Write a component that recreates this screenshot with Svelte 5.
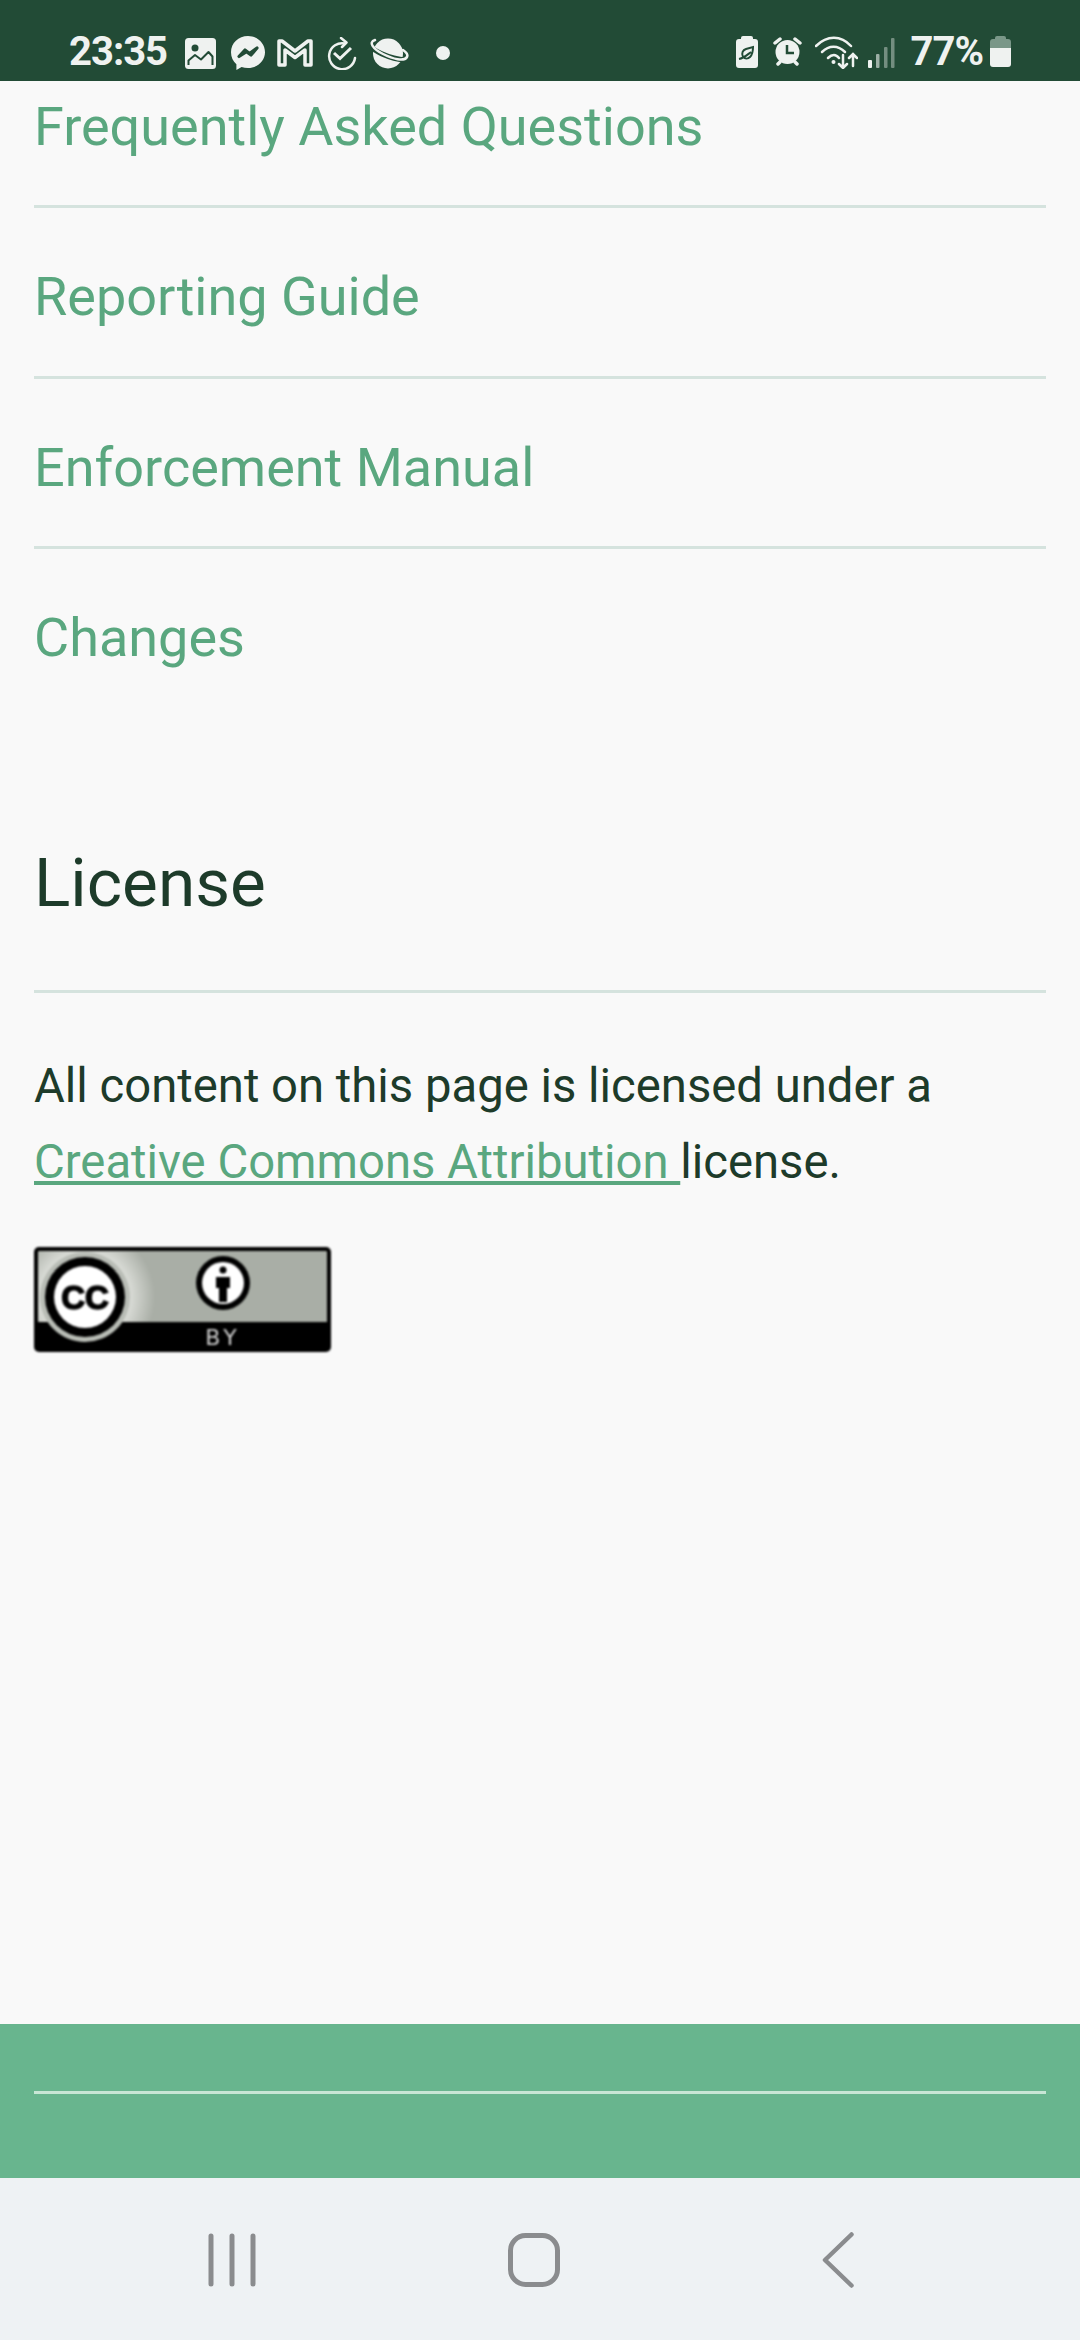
<script lang="ts">
	const links = ['Frequently Asked Questions', 'Reporting Guide', 'Enforcement Manual', 'Changes'];
</script>

<div class="phone">
	<header class="statusbar">
		<span class="clock">23:35</span>
		<div class="notif">
			<span class="slot">
				<svg width="31" height="31" viewBox="0 0 31 31">
					<rect width="31" height="31" rx="3.500" fill="#eff2f0"/>
					<circle cx="10" cy="10" r="3.500" fill="#224b36"/>
					<path fill="none" stroke="#224b36" stroke-width="2" stroke-linejoin="round" d="M3.500 27v-4.500L10 17l6 4.500 7.500-7.500 4 4.500V27"/>
				</svg>
			</span>
			<span class="slot">
				<svg width="34" height="35" viewBox="0 0 34 35">
					<path fill="#eff2f0" d="M17 0C7.500 0 0 7 0 16.300c0 4.900 2 9.100 5.400 12v5.700l5.200-2.900c2 .6 4.100.9 6.400.9 9.500 0 17-7 17-15.700S26.500 0 17 0z"/>
					<path fill="none" stroke="#224b36" stroke-width="3.200" stroke-linejoin="round" d="M8 20.500l6-6.500 4.500 3.500L26 12l-6 7-4.500-3.300z"/>
				</svg>
			</span>
			<span class="slot">
				<svg width="36" height="28" viewBox="0 0 36 28">
					<path fill="none" stroke="#eff2f0" stroke-width="3.500" stroke-linejoin="round" d="M2 2h3l13 10 13-10h3v24h-6V11l-10 7.500L8 11v15H2z"/>
				</svg>
			</span>
			<span class="slot">
				<svg width="30" height="33" viewBox="0 0 30 33">
					<path fill="none" stroke="#eff2f0" stroke-width="2.500" stroke-linecap="round" d="M18 6.500A13 13 0 1 0 28 21"/>
					<path fill="none" stroke="#eff2f0" stroke-width="2.500" stroke-linecap="round" stroke-linejoin="round" d="M14 1l5.500 4.500L15 10"/>
					<path fill="none" stroke="#eff2f0" stroke-width="3" d="M7 16l6 5.500L24 11"/>
				</svg>
			</span>
			<span class="slot">
				<svg width="40" height="31" viewBox="0 0 40 31">
					<ellipse cx="19" cy="15.500" rx="15" ry="15" fill="#eff2f0"/>
					<path fill="none" stroke="#224b36" stroke-width="5" d="M0 6c2 6 20 15 37 16"/>
					<path fill="none" stroke="#eff2f0" stroke-width="2.500" stroke-linecap="round" d="M6 2C-1 4 4 11 14 16s21 8 24 3c1-2-1-5-4-7"/>
				</svg>
			</span>
			<span class="dot"></span>
		</div>

		<div class="sys">
			<svg class="s-batt" width="22" height="32" viewBox="0 0 22 32">
				<path fill="#eff2f0" d="M7 0h8a2 2 0 0 1 2 2v1h2a3 3 0 0 1 3 3v23a3 3 0 0 1-3 3H3a3 3 0 0 1-3-3V6a3 3 0 0 1 3-3h2V2a2 2 0 0 1 2-2z"/>
				<path fill="none" stroke="#224b36" stroke-width="2" d="M3 23c5-1 8-4 12-7M7 21c-2-4 0-7 3-8l7-2c0 4-1 8-3 10s-5 2-7 0"/>
			</svg>
			<svg class="s-alarm" width="29" height="30" viewBox="0 0 29 30">
				<circle cx="14.500" cy="16" r="12" fill="#eff2f0"/>
				<path fill="none" stroke="#eff2f0" stroke-width="3.500" stroke-linecap="round" d="M2 7l5-4M27 7l-5-4M5 28l2-2M24 28l-2-2"/>
				<path fill="none" stroke="#224b36" stroke-width="2.500" d="M14 9v8h7"/>
			</svg>
			<svg class="s-wifi" width="43" height="33" viewBox="0 0 43 33">
				<g fill="none" stroke="#eff2f0" stroke-width="2.500" stroke-linecap="round">
					<path d="M1 10C12 -1 26 -1 36 10"/>
					<path d="M7 16c7-7 16-7 23 0"/>
					<path d="M13 22c4-4 8-4 11 0"/>
					<path d="M28 19v13M24 28l4 4 4-4M38 30V18M34 22l4-4 4 4"/>
				</g>
				<circle cx="18.500" cy="26" r="2" fill="#eff2f0"/>
			</svg>
			<svg class="s-signal" width="27" height="30" viewBox="0 0 27 30">
				<rect x="0" y="22" width="4" height="8" rx="1" fill="#eff2f0"/>
				<rect x="8" y="16" width="3.500" height="14" rx="1" fill="#eff2f0" opacity="0.6"/>
				<rect x="16" y="9" width="3.500" height="21" rx="1" fill="#eff2f0" opacity="0.4"/>
				<rect x="23" y="0" width="3.500" height="30" rx="1" fill="#eff2f0" opacity="0.4"/>
			</svg>
			<span class="pct">77%</span>
			<svg class="s-level" width="21" height="31" viewBox="0 0 21 31">
				<path fill="#7a9788" d="M7 0h7a2 2 0 0 1 2 2v1h2a3 3 0 0 1 3 3v6H0V6a3 3 0 0 1 3-3h2V2a2 2 0 0 1 2-2z"/>
				<path fill="#eff2f0" d="M0 12h21v16a3 3 0 0 1-3 3H3a3 3 0 0 1-3-3z"/>
			</svg>
		</div>
	</header>

	<main class="page">
		<ul class="links">
			{#each links as link}
				<li><a href="#top">{link}</a></li>
			{/each}
		</ul>

		<h2>License</h2>
		<p>
			All content on this page is licensed under a
			<a class="inline" href="#top">Creative Commons Attribution&nbsp;</a>license.
		</p>

		<svg class="badge" width="297" height="105" viewBox="0 0 297 105" role="img" aria-label="CC BY">
			<defs>
				<radialGradient id="halo" gradientUnits="userSpaceOnUse" cx="51" cy="50" r="70">
					<stop offset="0.6" stop-color="#dfe1dc"/>
					<stop offset="1" stop-color="#a9aea6"/>
				</radialGradient>
			</defs>
			<rect width="297" height="105" rx="5" fill="#000"/>
			<path d="M5 4h287a1 1 0 0 1 1 1v70H5a1 1 0 0 1-1-1V5a1 1 0 0 1 1-1z" fill="url(#halo)"/>
			<circle cx="51" cy="50" r="45" fill="#b9bdb6"/>
			<circle cx="51" cy="50" r="40" fill="#000"/>
			<circle cx="51" cy="50" r="31" fill="#fff"/>
			<text class="cc" x="51" y="62">CC</text>
			<circle cx="189" cy="36" r="27" fill="#000"/>
			<circle cx="189" cy="36" r="21" fill="#fff"/>
			<circle cx="189" cy="23" r="3.500" fill="#000"/>
			<path d="M182 30h14v11h-3v14h-8V41h-3z" fill="#000"/>
			<text class="by" x="189" y="98">BY</text>
		</svg>
	</main>

	<footer class="foot">
		<hr />
	</footer>

	<nav class="navbar">
		<svg width="48" height="54" viewBox="0 0 48 54">
			<path fill="none" stroke="#8a8c8e" stroke-width="5" stroke-linecap="round" d="M3 3v48M24 3v48M45 3v48"/>
		</svg>
		<svg width="52" height="54" viewBox="0 0 52 54">
			<rect x="2.500" y="2.500" width="47" height="49" rx="15" fill="none" stroke="#8a8c8e" stroke-width="5"/>
		</svg>
		<svg width="32" height="56" viewBox="0 0 32 56">
			<path fill="none" stroke="#8a8c8e" stroke-width="4.500" stroke-linecap="round" stroke-linejoin="round" d="M29.500 2.500L3 28l26.500 25.500"/>
		</svg>
	</nav>
</div>

<style>
	:global(body) {
		margin: 0;
		background: #f9f9f9;
	}

	.phone {
		width: 1080px;
		height: 2340px;
		display: flex;
		flex-direction: column;
		overflow: hidden;
		font-family: Roboto, 'Liberation Sans', sans-serif;
	}

	.statusbar {
		height: 81px;
		flex: none;
		box-sizing: border-box;
		background: #224b36;
		color: #eff2f0;
		display: flex;
		align-items: flex-start;
		justify-content: space-between;
		padding: 0 69px;
		position: relative;
		z-index: 1;
	}

	.clock {
		font-size: 40px;
		font-weight: 700;
		line-height: 40px;
		margin-top: 32px;
		letter-spacing: -1px;
		width: 108px;
	}

	.notif {
		display: flex;
		align-items: center;
		height: 40px;
		margin-top: 33px;
		margin-right: auto;
	}

	.slot {
		width: 47px;
		display: flex;
		justify-content: center;
	}

	.slot svg {
		display: block;
	}

	.dot {
		width: 14px;
		height: 14px;
		border-radius: 50%;
		background: #eff2f0;
		margin-left: 24px;
	}

	.sys {
		display: flex;
		align-items: flex-start;
		padding-top: 36px;
	}

	.sys svg {
		display: block;
	}

	.s-alarm {
		margin-left: 15px;
	}

	.s-wifi {
		margin-left: 13px;
	}

	.s-signal {
		margin-left: 10px;
		margin-top: 2px;
	}

	.pct {
		font-size: 40px;
		font-weight: 700;
		line-height: 32px;
		margin-left: 16px;
		margin-right: 7px;
		letter-spacing: -1px;
	}

	.page {
		flex: 1;
		padding: 0 34px;
		min-height: 0;
	}

	.links {
		list-style: none;
		margin: -43.500px 0 0;
		padding: 0;
	}

	.links li {
		height: 157.500px;
		padding-top: 10px;
		display: flex;
		align-items: center;
		border-bottom: 3px solid #d5e3de;
	}

	.links li:last-child {
		border-bottom: none;
	}

	.links a {
		color: #5aa77f;
		font-size: 54px;
		text-decoration: none;
	}

	h2 {
		margin: 129px 0 0;
		padding-bottom: 70px;
		border-bottom: 3px solid #d5e3de;
		color: #1d3b2a;
		font-size: 67.500px;
		font-weight: 400;
		line-height: 74px;
	}

	p {
		margin: 55px 0 0;
		color: #1d3b2a;
		font-size: 47.250px;
		line-height: 76px;
	}

	.inline {
		color: #5aa77f;
		text-decoration: underline;
	}

	.badge {
		display: block;
		margin-top: 47px;
		filter: blur(0.8px);
	}

	.cc {
		font-family: 'Liberation Sans', sans-serif;
		font-size: 33px;
		font-weight: 700;
		text-anchor: middle;
		stroke: #000;
		stroke-width: 1.500px;
	}

	.by {
		font-family: 'DejaVu Sans', sans-serif;
		font-size: 22px;
		fill: #d0d0d0;
		text-anchor: middle;
		letter-spacing: 4px;
	}

	.foot {
		height: 154px;
		flex: none;
		box-sizing: border-box;
		background: #68b58e;
		padding: 67px 34px 0;
	}

	hr {
		margin: 0;
		border: 0;
		height: 3px;
		background: #c8e6d5;
	}

	.navbar {
		height: 162px;
		flex: none;
		background: #eef2f4;
		display: grid;
		grid-template-columns: 464px 1fr 1fr;
		align-items: center;
	}

	.navbar svg {
		display: block;
		margin-top: 2px;
	}

	.navbar svg:nth-child(1) {
		margin-left: 208px;
	}

	.navbar svg:nth-child(2) {
		margin-left: 44px;
	}

	.navbar svg:nth-child(3) {
		margin-left: 50px;
	}
</style>
